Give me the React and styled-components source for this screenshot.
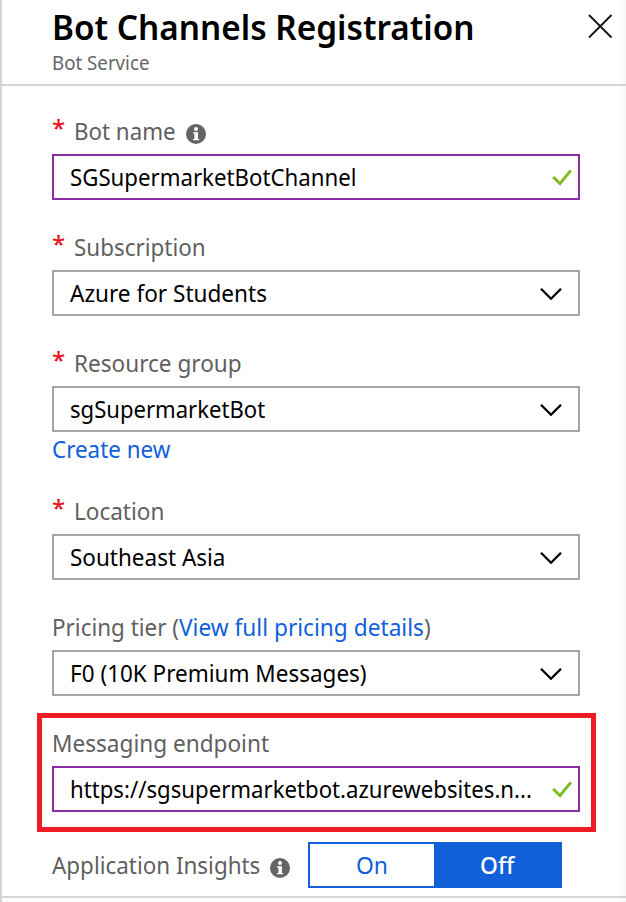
import React from 'react';
import styled, { createGlobalStyle } from 'styled-components';

const GlobalStyle = createGlobalStyle`
  * { box-sizing: border-box; }
  body { margin: 0; background: #fff; font-family: "Noto Sans", "Open Sans", sans-serif; }
`;

const Blade = styled.main`
  width: 626px;
  height: 902px;
  overflow: hidden;
  border-left: 2px solid #d4d4d4;
  background: linear-gradient(to right, #fff 616px, #f6f6f6 624px);
`;

const Header = styled.header`
  display: flex;
  justify-content: space-between;
  height: 86px;
  padding: 4px 13px 0 50px;
  border-bottom: 2px solid #d4d4d4;
`;

/* Condensed run of text: $w is the space it takes, $r the horizontal squeeze. */
const Text = styled.span`
  display: block;
  flex: none;
  width: ${p => p.$w}px;
  white-space: nowrap;
  transform: scaleX(${p => p.$r});
  transform-origin: 0 50%;
`;

const Title = styled.h1`
  margin: 0;
  font-size: 35px;
  font-weight: 600;
  line-height: 46px;
  color: #000;
`;

const Subtitle = styled.div`
  margin-top: -1px;
  font-size: 20px;
  line-height: 28px;
  color: #666;
`;

const CloseButton = styled.button`
  display: block;
  width: 26px;
  height: 26px;
  margin-top: 9px;
  padding: 0;
  border: 0;
  background: none;
  svg { display: block; }
`;

const Form = styled.form`
  display: flex;
  flex-direction: column;
  height: 812px;
  padding: 29px 44px 0 50px;
  border-bottom: 2px solid #d4d4d4;
`;

const Field = styled.div`
  flex: none;
  width: 528px;
  margin-bottom: 31px;
`;

const Label = styled.div`
  display: flex;
  height: 32px;
  margin-bottom: 7px;
  font-size: 24px;
  line-height: 32px;
  color: #5f5f5f;
`;

const Required = styled.span`
  width: 22px;
  font-size: 24px;
  font-weight: 500;
  line-height: 26px;
  color: #e81123;
`;

const Control = styled.div`
  display: flex;
  align-items: center;
  justify-content: space-between;
  height: 46px;
  padding: 0 ${p => (p.$valid ? 6 : 16)}px 0 16px;
  border: 2px solid ${p => (p.$valid ? '#8a2da5' : '#a6a6a6')};
  background: #fff;
  font-size: 24px;
  line-height: 42px;
  color: #000;
`;

const Link = styled.a`
  display: block;
  height: 31px;
  margin-top: 1px;
  font-size: 24px;
  line-height: 32px;
  color: #1160da;
`;

const InlineLink = styled(Text)`
  color: #1160da;
`;

const Highlight = styled.section`
  flex: none;
  width: 559px;
  height: 119px;
  margin: -14px 0 10px -15px;
  padding: 9px 11px 0 10px;
  border: 5px solid #ee1c25;
`;

const InsightsRow = styled.div`
  display: flex;
  align-items: center;
  height: 46px;
  font-size: 24px;
  line-height: 46px;
  color: #5f5f5f;
`;

const Toggle = styled.div`
  display: flex;
  width: 254px;
  height: 46px;
  margin-left: 18px;
  border: 2px solid #1160da;
`;

const Option = styled.div`
  width: ${p => (p.$active ? 126 : 124)}px;
  padding-left: ${p => (p.$active ? 46 : 46)}px;
  font-weight: ${p => (p.$active ? 500 : 400)};
  line-height: 42px;
  color: ${p => (p.$active ? '#fff' : '#1160da')};
  background: ${p => (p.$active ? '#1160da' : '#fff')};
`;

const InfoSvg = styled.svg`
  display: block;
  flex: none;
  margin-top: ${p => p.$top}px;
`;

const InfoIcon = ({ top }) => (
  <InfoSvg $top={top} width="20" height="20" viewBox="0 0 20 20">
    <circle cx="10" cy="10" r="10" fill="#646464" />
    <circle cx="10" cy="4.9" r="2" fill="#fff" />
    <path d="M7 8.2h5v6.9h1.2v1.2H7v-1.2h1.4V9.4H7z" fill="#fff" />
  </InfoSvg>
);

const Chevron = () => (
  <svg width="22" height="14" viewBox="0 0 22 14">
    <path d="M1 2.7l10 10 10-10" fill="none" stroke="#000" strokeWidth="2.3" />
  </svg>
);

const Check = () => (
  <svg width="20" height="18" viewBox="0 0 20 18">
    <path d="M1.2 9l6.8 6.6L18.8 2.4" fill="none" stroke="#7fba1f" strokeWidth="3" />
  </svg>
);

const SelectField = ({ label, value, children }) => (
  <Field>
    <Label>{label}</Label>
    <Control>{value}<Chevron /></Control>
    {children}
  </Field>
);

const RequiredLabel = ({ w, r, children }) => (
  <>
    <Required>*</Required>
    <Text $w={w} $r={r}>{children}</Text>
  </>
);

export default function App() {
  return (
    <>
      <GlobalStyle />
      <Blade>
        <Header>
          <div>
            <Title><Text $w={430} $r={0.952}>Bot Channels Registration</Text></Title>
            <Subtitle><Text $w={100} $r={0.935}>Bot Service</Text></Subtitle>
          </div>
          <CloseButton type="button" aria-label="Close">
            <svg width="26" height="26" viewBox="0 0 26 26">
              <path d="M2 2l22.5 22.5M24.5 2L2 24.5" stroke="#111" strokeWidth="1.8" />
            </svg>
          </CloseButton>
        </Header>
        <Form>
          <Field>
            <Label>
              <RequiredLabel w={112} r={0.93}>Bot name</RequiredLabel>
              <InfoIcon top={9} />
            </Label>
            <Control $valid>
              <Text $w={300} $r={0.926}>SGSupermarketBotChannel</Text>
              <Check />
            </Control>
          </Field>
          <SelectField
            label={<RequiredLabel w={140} r={0.935}>Subscription</RequiredLabel>}
            value={<Text $w={220} $r={0.94}>Azure for Students</Text>}
          />
          <SelectField
            label={<RequiredLabel w={180} r={0.94}>Resource group</RequiredLabel>}
            value={<Text $w={220} $r={0.92}>sgSupermarketBot</Text>}
          >
            <Link><Text $w={130} $r={0.933}>Create new</Text></Link>
          </SelectField>
          <SelectField
            label={<RequiredLabel w={100} r={0.938}>Location</RequiredLabel>}
            value={<Text $w={180} $r={0.937}>Southeast Asia</Text>}
          />
          <SelectField
            label={
              <>
                <Text $w={127} $r={0.935}>Pricing tier (</Text>
                <InlineLink $w={245} $r={0.945}>View full pricing details</InlineLink>
                <Text $w={8} $r={0.935}>)</Text>
              </>
            }
            value={<Text $w={310} $r={0.937}>F0 (10K Premium Messages)</Text>}
          />
          <Highlight>
            <Label><Text $w={230} $r={0.941}>Messaging endpoint</Text></Label>
            <Control $valid>
              <Text $w={470} $r={0.924}>https://sgsupermarketbot.azurewebsites.n...</Text>
              <Check />
            </Control>
          </Highlight>
          <InsightsRow>
            <Text $w={218} $r={0.934}>Application Insights</Text>
            <InfoIcon top={6} />
            <Toggle>
              <Option><Text $w={34} $r={0.95}>On</Text></Option>
              <Option $active><Text $w={38} $r={0.951}>Off</Text></Option>
            </Toggle>
          </InsightsRow>
        </Form>
      </Blade>
    </>
  );
}
